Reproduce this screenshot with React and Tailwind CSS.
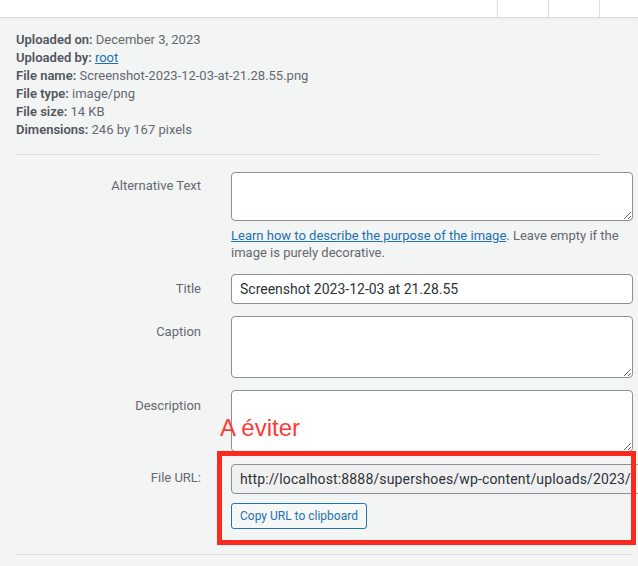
import React from 'react';

const info = [
  ['Uploaded on:', 'December 3, 2023'],
  ['Uploaded by:', 'root', true],
  ['File name:', 'Screenshot-2023-12-03-at-21.28.55.png'],
  ['File type:', 'image/png'],
  ['File size:', '14 KB'],
  ['Dimensions:', '246 by 167 pixels'],
];

const Row = ({ label, pad = 'pt-[5px]', children }) => (
  <div className="flex">
    <div className={`w-[185px] shrink-0 ${pad} text-right text-[13px] leading-[18px] text-[#646970]`}>
      {label}
    </div>
    <div className="ml-[30px] w-[402px] shrink-0">{children}</div>
  </div>
);

export default function App() {
  return (
    <div className="relative w-[638px] h-[566px] overflow-hidden bg-[#f3f4f4] font-['Roboto',sans-serif] text-[#646970]">
      {/* top toolbar strip */}
      <div className="flex h-[18px] justify-end border-b border-[#dcdcde] bg-white shadow-[0_1px_2px_rgba(0,0,0,0.04)]">
        <div className="w-[51px] border-l border-[#dcdcde]" />
        <div className="w-[51px] border-l border-[#dcdcde]" />
        <div className="w-[39px] border-l border-[#dcdcde]" />
      </div>

      {/* attachment info */}
      <div className="px-4 pt-[13px] text-[13px] leading-[18px]">
        {info.map(([k, v, link]) => (
          <div key={k}>
            <span className="font-semibold text-[#50575e]">{k}</span>{' '}
            {link ? <a className="text-[#2271b1] underline">{v}</a> : v}
          </div>
        ))}
      </div>
      <div className="mx-4 mt-[15px] w-[583px] border-t border-[#dcdcde]" />

      {/* settings */}
      <div className="mx-4 mt-[17px] flex flex-col gap-[12px]">
        <Row label="Alternative Text">
          <textarea className="block h-[49px] w-full rounded-[4px] border border-[#8c8f94] bg-white" />
          <p className="mt-[6px] mb-[1px] text-[13px] leading-[17px] text-[#646970]">
            <a className="text-[#2271b1] underline">Learn how to describe the purpose of the image</a>. Leave empty if the image is purely decorative.
          </p>
        </Row>
        <Row label="Title" pad="pt-[6px]">
          <input
            readOnly
            value="Screenshot 2023-12-03 at 21.28.55"
            className="block h-[30px] w-full rounded-[4px] border border-[#8c8f94] bg-white px-[8px] text-[14px] text-[#2c3338] outline-none"
          />
        </Row>
        <Row label="Caption" pad="pt-[7px]">
          <textarea className="block h-[62px] w-full rounded-[4px] border border-[#8c8f94] bg-white" />
        </Row>
        <Row label="Description" pad="pt-[7px]">
          <textarea className="block h-[62px] w-full rounded-[4px] border border-[#8c8f94] bg-white" />
        </Row>
        <Row label="File URL:">
          <input
            readOnly
            value="http://localhost:8888/supershoes/wp-content/uploads/2023/12/Screenshot-2023-12-03-at-21.28.55.png"
            className="block h-[30px] w-[410px] rounded-[4px] border border-[#8c8f94] bg-[#f0f0f1] px-[8px] text-[14px] tracking-[0.15px] text-[#2c3338] outline-none"
          />
          <button className="mt-[9px] h-[26px] rounded-[3px] border border-[#2271b1] bg-[#f6f7f7] px-[8px] text-[12px] text-[#2271b1]">
            Copy URL to clipboard
          </button>
        </Row>
      </div>
      <div className="mx-4 mt-[25px] w-[617px] border-t border-[#dcdcde]" />

      {/* annotation overlay */}
      <div className="absolute left-[220px] top-[416px] font-['Liberation_Sans',sans-serif] text-[24px] leading-none text-[#fd3b37]">
        A éviter
      </div>
      <div className="absolute left-[217px] top-[451px] h-[94px] w-[419px] border-[5px] border-[#fb2a1f]" />
    </div>
  );
}
